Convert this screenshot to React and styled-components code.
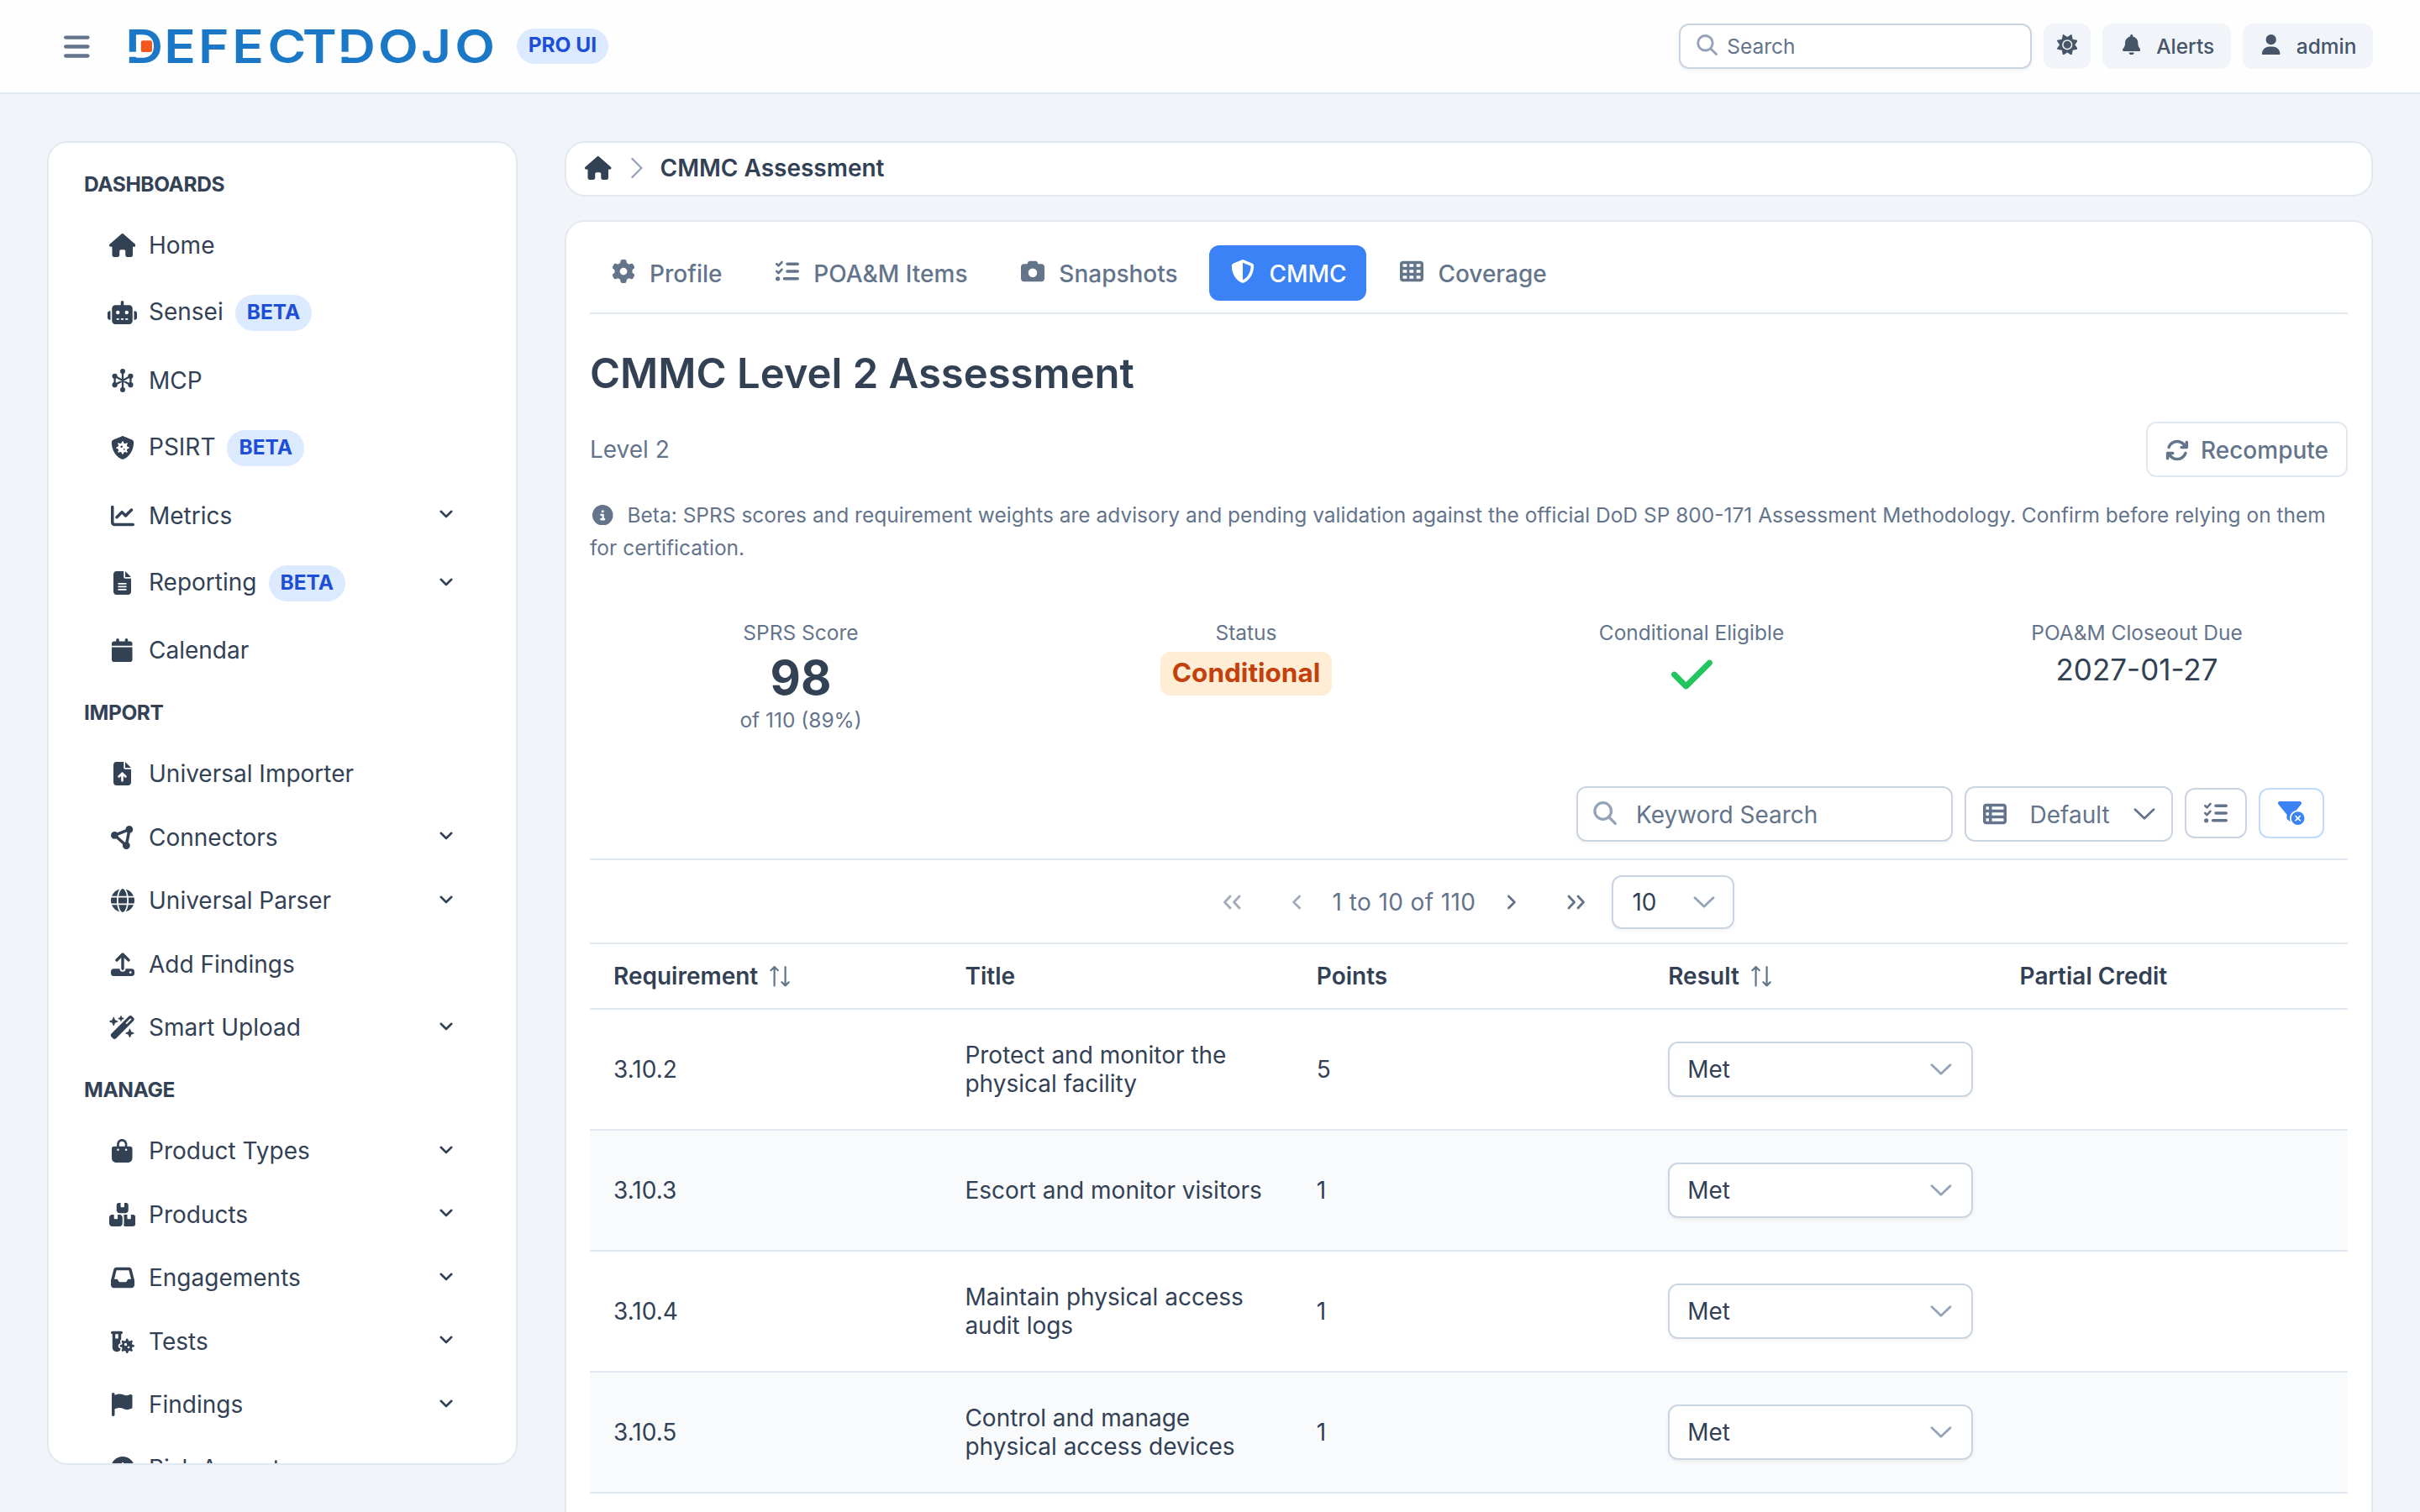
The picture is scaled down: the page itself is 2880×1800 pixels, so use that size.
import React, { useState } from "react";
import styled, { createGlobalStyle } from "styled-components";
import { IconContext } from "react-icons";
import {
  FaArrowsRotate,
  FaBagShopping,
  FaBars,
  FaBell,
  FaBoxesStacked,
  FaCalendar,
  FaCamera,
  FaChartLine,
  FaCheck,
  FaCircleExclamation,
  FaCircleInfo,
  FaCircleNodes,
  FaFileArrowUp,
  FaFileLines,
  FaFilterCircleXmark,
  FaFlag,
  FaGear,
  FaGlobe,
  FaHouse,
  FaInbox,
  FaListCheck,
  FaRobot,
  FaShieldHalved,
  FaShieldVirus,
  FaSun,
  FaTableCells,
  FaTableList,
  FaUser,
  FaVialVirus,
  FaWandMagicSparkles,
} from "react-icons/fa6";

// percentage sizes let each icon keep the aspect ratio of its viewBox
const iconConfig = { size: "100%" };

const line = {
  fill: "none",
  stroke: "currentColor",
  strokeLinecap: "round",
  strokeLinejoin: "round",
};

const SearchIcon = () => (
  <svg viewBox="0 0 28 28" {...line} strokeWidth="3.2">
    <circle cx="11.7" cy="11.5" r="9.8" />
    <path d="M19 19l7.3 7.3" />
  </svg>
);

const ChevronIcon = () => (
  <svg viewBox="0 0 28 28" {...line} strokeWidth="2.8">
    <path d="M3 8.8L14 19.2L25 8.8" />
  </svg>
);

const SmallChevronIcon = () => (
  <svg viewBox="0 0 20 20" {...line} strokeWidth="2.6">
    <path d="M3.7 6.8L10 13L16.3 6.8" />
  </svg>
);

const CrumbIcon = () => (
  <svg viewBox="0 0 28 28" {...line} strokeWidth="2.4">
    <path d="M8.4 3L19.4 14L8.4 25" />
  </svg>
);

const AngleIcon = ({ double, flip }) => (
  <svg
    viewBox="0 0 28 28"
    {...line}
    strokeWidth="2.8"
    transform={flip ? "scale(-1 1)" : undefined}
  >
    {double ? (
      <path d="M5 7L11.5 14L5 21M16 7L22.5 14L16 21" />
    ) : (
      <path d="M10.4 7L17.4 14L10.4 21" />
    )}
  </svg>
);

const SortIcon = () => (
  <svg viewBox="0 0 28 28" {...line} strokeWidth="2.2">
    <path d="M7.6 25.4V3M3.4 7.2L7.6 3L11.8 7.2M20.6 3V25.4M16.4 21.2L20.6 25.4L24.8 21.2" />
  </svg>
);

const McpIcon = () => (
  <svg viewBox="0 0 28 28" fill="currentColor">
    <path
      d="M14 3V25M4.6 8.8L23.4 19.2M4.6 19.2L23.4 8.8M4.6 8.8V19.2M23.4 8.8V19.2"
      {...line}
      strokeWidth="2.3"
    />
    <circle cx="14" cy="3" r="3" />
    <circle cx="14" cy="25" r="3" />
    <circle cx="4.6" cy="8.8" r="3.1" />
    <circle cx="4.6" cy="19.2" r="3.1" />
    <circle cx="23.4" cy="8.8" r="3.1" />
    <circle cx="23.4" cy="19.2" r="3.1" />
  </svg>
);

const UploadIcon = () => (
  <svg viewBox="0 0 28 28" fill="currentColor">
    <path d="M3.5 19.2H10.5V19.3A3.5 3.5 0 0 0 17.5 19.3V19.2H24.5A3.5 3.5 0 0 1 28 22.7V24.5A3.5 3.5 0 0 1 24.5 28H3.5A3.5 3.5 0 0 1 0 24.5V22.7A3.5 3.5 0 0 1 3.5 19.2Z" />
    <circle cx="23.2" cy="23.6" r="1.4" fill="#fff" />
    <path d="M14 19.2V2.2M7 9L14 2L21 9" {...line} strokeWidth="3.4" />
  </svg>
);

const Logo = () => (
  <LogoSvg viewBox="-6 -14 446 68">
    <text
      transform="scale(1.14 1)"
      x="-4.2 36.2 72 107.3 144.4 180.4 217.6 259.6 304.4 339.6"
      y="39.8"
      fill="#1a78c6"
      fontFamily="Inter, sans-serif"
      fontSize="54.5"
      fontWeight="600"
    >
      DEFECTDOJO
    </text>
    <rect x="-1" y="26.7" width="11.5" height="6" fill="#fefefe" />
    <rect x="252" y="26.7" width="11.5" height="6" fill="#fefefe" />
    <rect x="13.8" y="13.3" width="13.2" height="13.6" rx="2" fill="#f4571e" />
  </LogoSvg>
);

const menu = [
  {
    title: "DASHBOARDS",
    items: [
      { icon: <FaHouse />, label: "Home" },
      { icon: <FaRobot />, label: "Sensei", beta: true },
      { icon: <McpIcon />, label: "MCP" },
      { icon: <FaShieldVirus />, label: "PSIRT", beta: true },
      { icon: <FaChartLine />, label: "Metrics", more: true },
      { icon: <FaFileLines />, label: "Reporting", beta: true, more: true },
      { icon: <FaCalendar />, label: "Calendar" },
    ],
  },
  {
    title: "IMPORT",
    items: [
      { icon: <FaFileArrowUp />, label: "Universal Importer" },
      { icon: <FaCircleNodes />, label: "Connectors", more: true },
      { icon: <FaGlobe />, label: "Universal Parser", more: true },
      { icon: <UploadIcon />, label: "Add Findings" },
      { icon: <FaWandMagicSparkles />, label: "Smart Upload", more: true },
    ],
  },
  {
    title: "MANAGE",
    items: [
      { icon: <FaBagShopping />, label: "Product Types", more: true },
      { icon: <FaBoxesStacked />, label: "Products", more: true },
      { icon: <FaInbox />, label: "Engagements", more: true },
      { icon: <FaVialVirus />, label: "Tests", more: true },
      { icon: <FaFlag />, label: "Findings", more: true },
      { icon: <FaCircleExclamation />, label: "Risk Acceptance", more: true },
    ],
  },
];

const tabs = [
  { icon: <FaGear />, label: "Profile" },
  { icon: <FaListCheck />, label: "POA&M Items" },
  { icon: <FaCamera />, label: "Snapshots" },
  { icon: <FaShieldHalved />, label: "CMMC" },
  { icon: <FaTableCells />, label: "Coverage" },
];

const requirements = [
  { id: "3.10.2", title: "Protect and monitor the physical facility", points: 5 },
  { id: "3.10.3", title: "Escort and monitor visitors", points: 1 },
  { id: "3.10.4", title: "Maintain physical access audit logs", points: 1 },
  { id: "3.10.5", title: "Control and manage physical access devices", points: 1 },
];

const App = () => {
  const [activeTab, setActiveTab] = useState("CMMC");
  return (
    <IconContext.Provider value={iconConfig}>
      <GlobalStyle />
      <Page>
        <Header>
          <MenuButton>
            <FaBars />
          </MenuButton>
          <Logo />
          <ProBadge>PRO UI</ProBadge>
          <HeaderActions>
            <HeaderSearch>
              <SearchIcon />
              Search
            </HeaderSearch>
            <HeaderButton $iconOnly>
              <FaSun />
            </HeaderButton>
            <HeaderButton>
              <FaBell />
              Alerts
            </HeaderButton>
            <HeaderButton>
              <FaUser />
              admin
            </HeaderButton>
          </HeaderActions>
        </Header>
        <Layout>
          <Sidebar>
            {menu.map((group) => (
              <React.Fragment key={group.title}>
                <MenuTitle>{group.title}</MenuTitle>
                {group.items.map((item) => (
                  <MenuItem key={item.label} $beta={item.beta}>
                    <MenuIcon>{item.icon}</MenuIcon>
                    <MenuLabel $beta={item.beta}>{item.label}</MenuLabel>
                    {item.beta && <Badge>BETA</Badge>}
                    {item.more && (
                      <MenuChevron>
                        <SmallChevronIcon />
                      </MenuChevron>
                    )}
                  </MenuItem>
                ))}
              </React.Fragment>
            ))}
          </Sidebar>
          <Main>
            <Breadcrumb>
              <FaHouse />
              <Separator>
                <CrumbIcon />
              </Separator>
              CMMC Assessment
            </Breadcrumb>
            <Card>
              <Tabs>
                {tabs.map((tab) => (
                  <Tab
                    key={tab.label}
                    $active={tab.label === activeTab}
                    onClick={() => setActiveTab(tab.label)}
                  >
                    {tab.icon}
                    {tab.label}
                  </Tab>
                ))}
              </Tabs>
              <Title>CMMC Level 2 Assessment</Title>
              <LevelRow>
                Level 2
                <Recompute>
                  <FaArrowsRotate />
                  Recompute
                </Recompute>
              </LevelRow>
              <Notice>
                <FaCircleInfo />
                Beta: SPRS scores and requirement weights are advisory and
                pending validation against the official DoD SP 800-171
                Assessment Methodology. Confirm before relying on them for
                certification.
              </Notice>
              <Stats>
                <Stat>
                  <Muted>SPRS Score</Muted>
                  <Score>98</Score>
                  <Muted>of 110 (89%)</Muted>
                </Stat>
                <Stat>
                  <Muted>Status</Muted>
                  <Status>Conditional</Status>
                </Stat>
                <Stat>
                  <Muted>Conditional Eligible</Muted>
                  <Eligible>
                    <FaCheck />
                  </Eligible>
                </Stat>
                <Stat>
                  <Muted>POA&amp;M Closeout Due</Muted>
                  <DueDate>2027-01-27</DueDate>
                </Stat>
              </Stats>
              <Toolbar>
                <KeywordSearch>
                  <SearchIcon />
                  Keyword Search
                </KeywordSearch>
                <LayoutSelect>
                  <FaTableList />
                  <span>Default</span>
                  <ChevronIcon />
                </LayoutSelect>
                <IconButton>
                  <FaListCheck />
                </IconButton>
                <IconButton $primary>
                  <FaFilterCircleXmark />
                </IconButton>
              </Toolbar>
              <Paginator>
                <PageButton disabled>
                  <AngleIcon double flip />
                </PageButton>
                <PageButton disabled>
                  <AngleIcon flip />
                </PageButton>
                <PageReport>1 to 10 of 110</PageReport>
                <PageButton>
                  <AngleIcon />
                </PageButton>
                <PageButton>
                  <AngleIcon double />
                </PageButton>
                <PageSize>
                  10
                  <ChevronIcon />
                </PageSize>
              </Paginator>
              <HeadRow>
                <HeadCell>
                  Requirement
                  <SortIcon />
                </HeadCell>
                <HeadCell>Title</HeadCell>
                <HeadCell>Points</HeadCell>
                <HeadCell>
                  Result
                  <SortIcon />
                </HeadCell>
                <HeadCell>Partial Credit</HeadCell>
              </HeadRow>
              {requirements.map((req, index) => (
                <Row key={req.id} $striped={index % 2 === 1}>
                  <Cell>{req.id}</Cell>
                  <Cell>{req.title}</Cell>
                  <Cell>{req.points}</Cell>
                  <Cell>
                    <ResultSelect>
                      Met
                      <ChevronIcon />
                    </ResultSelect>
                  </Cell>
                  <Cell />
                </Row>
              ))}
            </Card>
          </Main>
        </Layout>
      </Page>
    </IconContext.Provider>
  );
};

const GlobalStyle = createGlobalStyle`
  * {
    box-sizing: border-box;
  }
  body {
    margin: 0;
    font-family: Inter, sans-serif;
    font-size: 28px;
    color: #334155;
    background: #f1f5f9;
  }
  button {
    font: inherit;
    color: inherit;
    border: none;
    background: none;
    padding: 0;
  }
  svg {
    flex: none;
  }
`;

const Page = styled.div`
  height: 1800px;
  overflow: hidden;
`;

const Header = styled.header`
  display: flex;
  align-items: center;
  height: 112px;
  padding: 0 56px 0 76px;
  background: #fefefe;
  border-bottom: 2px solid #e2e8f0;
`;

const MenuButton = styled.button`
  display: flex;
  margin-right: 41px;
  color: #64748b;
  svg {
    height: 35px;
    width: auto;
  }
`;

const LogoSvg = styled.svg`
  width: 446px;
  height: 68px;
`;

const Badge = styled.span`
  display: flex;
  align-items: center;
  height: 43px;
  margin-left: 14px;
  padding: 0 14px 2px;
  border-radius: 22px;
  font-size: 24.5px;
  font-weight: 700;
  color: #1d4ed8;
  background: #dbeafe;
`;

const ProBadge = styled(Badge)`
  margin-left: 21px;
  height: 42px;
  padding-bottom: 4px;
`;

const HeaderActions = styled.div`
  display: flex;
  gap: 14px;
  margin-left: auto;
`;

const Field = styled.div`
  display: flex;
  align-items: center;
  border: 2px solid #cbd5e1;
  border-radius: 12px;
  background: #fff;
  box-shadow: 0 2px 4px rgba(18, 18, 23, 0.05);
  svg {
    width: 28px;
    height: 28px;
    color: #94a3b8;
  }
`;

const HeaderSearch = styled(Field)`
  width: 420px;
  height: 54px;
  padding-left: 19px;
  gap: 11px;
  font-size: 24.5px;
  color: #64748b;
  svg {
    width: 25px;
    height: 25px;
    margin-bottom: 3px;
  }
`;

const HeaderButton = styled.button`
  display: flex;
  align-items: center;
  justify-content: center;
  gap: 19px;
  height: 54px;
  width: ${(props) => (props.$iconOnly ? "56px" : "auto")};
  padding: ${(props) => (props.$iconOnly ? "0" : "0 19.5px 0 23.5px")};
  border-radius: 12px;
  font-size: 24.5px;
  font-weight: 500;
  color: #475569;
  background: #f1f5f9;
  svg {
    height: 24.5px;
    width: auto;
    margin-bottom: 4px;
  }
`;

const Layout = styled.div`
  display: flex;
  align-items: flex-start;
  gap: 56px;
  padding: 56px;
`;

const Sidebar = styled.aside`
  flex: none;
  width: 560px;
  height: 1576px;
  padding: 13px 42px;
  overflow: hidden;
  background: #fff;
  border: 2px solid #e2e8f0;
  border-radius: 24px;
`;

const MenuTitle = styled.div`
  display: flex;
  align-items: center;
  height: 71px;
  font-size: 24.5px;
  font-weight: 700;
  letter-spacing: -0.4px;
`;

const MenuItem = styled.div`
  display: flex;
  align-items: center;
  height: ${(props) => (props.$beta ? "85.3px" : "75.6px")};
  padding: 0 31px 0 28px;
`;

const MenuIcon = styled.span`
  display: flex;
  justify-content: center;
  width: 35px;
  margin-right: 14px;
  svg {
    height: 28px;
    width: auto;
  }
`;

const MenuLabel = styled.span`
  padding-bottom: ${(props) => (props.$beta ? "3px" : "0")};
`;

const MenuChevron = styled.span`
  display: flex;
  margin-left: auto;
  padding-bottom: 3px;
  svg {
    width: 20px;
    height: 20px;
  }
`;

const Main = styled.main`
  flex: 1;
`;

const Breadcrumb = styled.nav`
  display: flex;
  align-items: center;
  height: 66px;
  padding: 0 0 2px 22px;
  font-weight: 600;
  background: #fff;
  border: 2px solid #e2e8f0;
  border-radius: 24px;
  svg {
    height: 28px;
    width: auto;
  }
`;

const Separator = styled.span`
  display: flex;
  margin: 0 14px 0 16px;
  color: #94a3b8;
`;

const Card = styled.section`
  height: 1600px;
  margin-top: 28px;
  padding: 28px;
  background: #fff;
  border: 2px solid #e2e8f0;
  border-radius: 24px;
`;

const Tabs = styled.div`
  display: flex;
  gap: 14px;
  padding-bottom: 14px;
  border-bottom: 2px solid #e2e8f0;
`;

const Tab = styled.button`
  display: flex;
  align-items: center;
  gap: 17px;
  height: 66px;
  padding: 1px 23.8px 0 26px;
  border-radius: 12px;
  font-weight: 500;
  color: ${(props) => (props.$active ? "#fff" : "#64748b")};
  background: ${(props) => (props.$active ? "#3b82f6" : "transparent")};
  svg {
    height: 28px;
    width: auto;
    margin-bottom: 5px;
  }
`;

const Title = styled.h1`
  margin: 41px 0 0;
  font-size: 49px;
  font-weight: 600;
  line-height: 60px;
`;

const LevelRow = styled.div`
  display: flex;
  align-items: center;
  justify-content: space-between;
  margin-top: 27px;
  color: #64748b;
`;

const Recompute = styled.button`
  display: flex;
  align-items: center;
  gap: 14px;
  height: 66px;
  padding: 1px 21px 0;
  border: 2px solid #e2e8f0;
  border-radius: 12px;
  font-weight: 500;
  svg {
    height: 28px;
    width: auto;
  }
`;

const Notice = styled.p`
  margin: 26px 0 0;
  font-size: 24.5px;
  line-height: 38.5px;
  color: #64748b;
  svg {
    width: 24.5px;
    height: 24.5px;
    margin: 0 17px 0 3px;
    vertical-align: -3px;
  }
`;

const Stats = styled.div`
  display: grid;
  grid-template-columns: repeat(4, 1fr);
  gap: 28px;
  height: 174px;
  margin-top: 63px;
`;

const Stat = styled.div`
  display: flex;
  flex-direction: column;
  align-items: center;
`;

const Muted = styled.div`
  font-size: 24.5px;
  line-height: 38px;
  color: #64748b;
`;

const Score = styled.div`
  padding-top: 5px;
  font-size: 56px;
  font-weight: 700;
  line-height: 61px;
`;

const Status = styled.div`
  display: flex;
  align-items: center;
  height: 52px;
  margin-top: 4px;
  padding: 0 14px 3px;
  border-radius: 12px;
  font-size: 31.5px;
  font-weight: 700;
  color: #c2410c;
  background: #ffedd5;
`;

const Eligible = styled.div`
  display: flex;
  margin-top: 3px;
  color: #22c55e;
  svg {
    width: auto;
    height: 56px;
  }
`;

const DueDate = styled.div`
  font-size: 35px;
  line-height: 50px;
`;

const Toolbar = styled.div`
  display: flex;
  align-items: center;
  justify-content: flex-end;
  gap: 14px;
  height: 116px;
  padding: 28px 28px 20px;
  border-bottom: 2px solid #e2e8f0;
`;

const KeywordSearch = styled(Field)`
  width: 448px;
  height: 66px;
  padding: 1px 0 0 18px;
  gap: 23px;
  color: #64748b;
  svg {
    margin-bottom: 4px;
  }
`;

const LayoutSelect = styled(Field)`
  width: 248px;
  height: 66px;
  padding: 1px 18px 0 20px;
  justify-content: space-between;
  color: #64748b;
  box-shadow: none;
  svg {
    margin-bottom: 2px;
    color: #64748b;
  }
`;

const IconButton = styled.button`
  display: flex;
  align-items: center;
  justify-content: center;
  height: 60px;
  width: ${(props) => (props.$primary ? "78px" : "74px")};
  margin-bottom: 2px;
  border: 2px solid ${(props) => (props.$primary ? "#bfdbfe" : "#cbd5e1")};
  border-radius: 12px;
  color: ${(props) => (props.$primary ? "#3b82f6" : "#64748b")};
  svg {
    height: 28px;
    width: auto;
  }
`;

const Paginator = styled.div`
  display: flex;
  align-items: center;
  justify-content: center;
  height: 100px;
  padding: 2px 4px 0 0;
  color: #64748b;
  border-bottom: 2px solid #e2e8f0;
`;

const PageButton = styled.button`
  display: flex;
  align-items: center;
  justify-content: center;
  width: 77px;
  height: 70px;
  opacity: ${(props) => (props.disabled ? 0.6 : 1)};
  svg {
    width: 28px;
    height: 28px;
  }
`;

const PageReport = styled.span`
  padding: 0 4px;
  letter-spacing: 0.4px;
`;

const PageSize = styled(Field)`
  justify-content: space-between;
  width: 146px;
  height: 64px;
  margin-left: 4px;
  padding: 0 20px 0 22px;
  color: #334155;
`;

const HeadRow = styled.div`
  display: grid;
  grid-template-columns: repeat(5, 1fr);
  height: 78px;
  border-bottom: 2px solid #e2e8f0;
`;

const HeadCell = styled.div`
  display: flex;
  align-items: center;
  gap: 12px;
  padding: 0 28px;
  font-weight: 600;
  svg {
    width: 28px;
    height: 28px;
    color: #64748b;
  }
`;

const Row = styled.div`
  display: grid;
  grid-template-columns: repeat(5, 1fr);
  height: 144px;
  background: ${(props) => (props.$striped ? "#f8fafc" : "#fff")};
  border-bottom: 2px solid #e2e8f0;
`;

const Cell = styled.div`
  display: flex;
  align-items: center;
  padding: 0 28px;
  line-height: 34px;
`;

const ResultSelect = styled(Field)`
  flex: 1;
  justify-content: space-between;
  height: 66px;
  padding: 0 22px 0 21px;
`;

export default App;
